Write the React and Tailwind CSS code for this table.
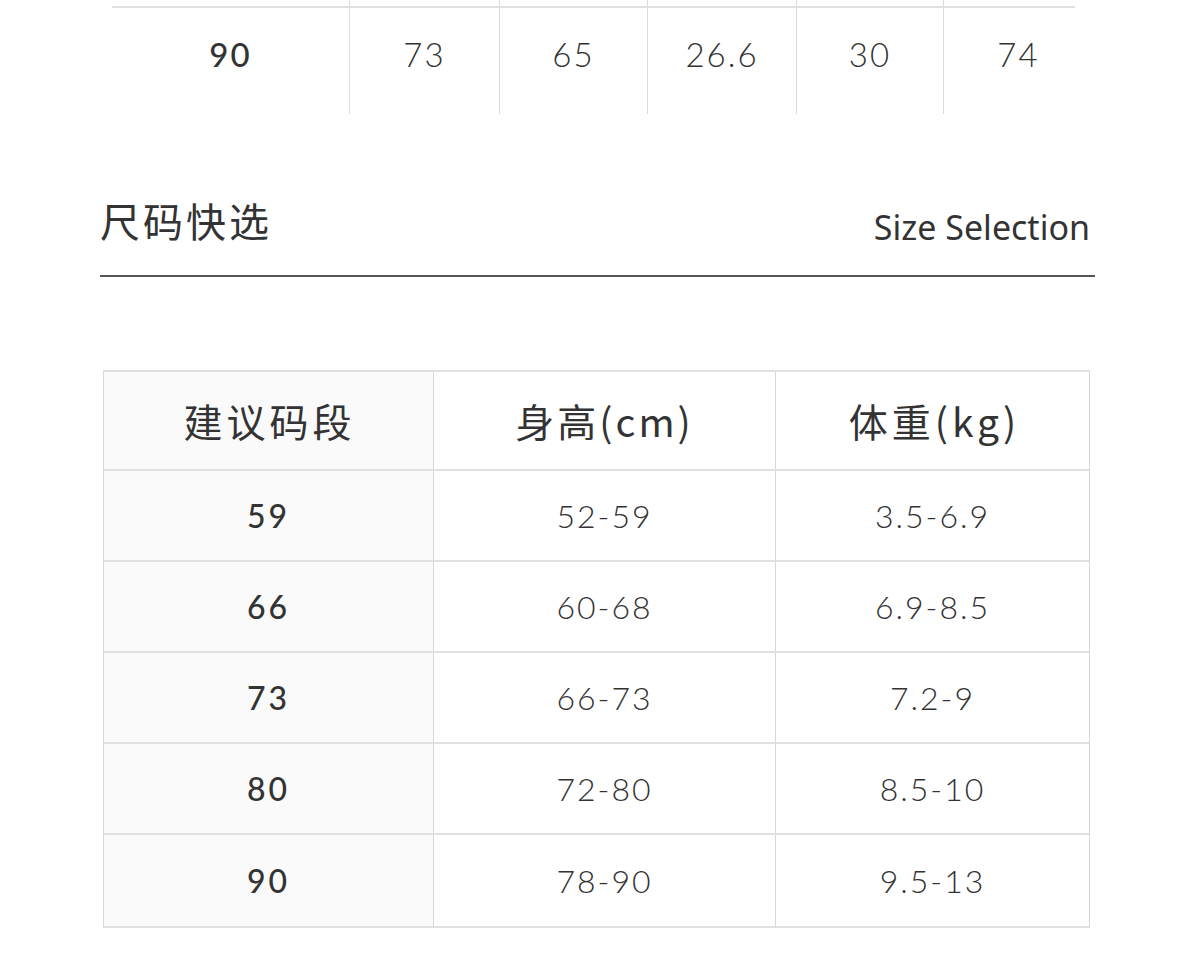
import React from "react";

const topRow = [
  {v: "90", w: "w-[237px]"},
  {v: "73", w: "w-[150px]"},
  {v: "65", w: "w-[148px]"},
  {v: "26.6", w: "w-[149px]"},
  {v: "30", w: "w-[147px]"},
  {v: "74", w: "w-[150px]"},
];

const sizes = [
  ["59", "52-59", "3.5-6.9"],
  ["66", "60-68", "6.9-8.5"],
  ["73", "66-73", "7.2-9"],
  ["80", "72-80", "8.5-10"],
  ["90", "78-90", "9.5-13"],
];

const cjk = "font-['Noto_Sans_CJK_SC','Noto_Sans',sans-serif]";
const num = "font-['Lato','Noto_Sans',sans-serif]";

function TopTable() {
  return (
    <div className="pl-[112px]">
      <div className="flex h-[6px]">
        {topRow.map((c, i) => (
          <div key={i} className={`${c.w} ${i > 0 ? "border-l border-[#dcdcdc]" : ""}`} />
        ))}
      </div>
      <div className="w-[963px] h-[2px] bg-[#e0e0e0]" />
      <div className="flex h-[106px]">
        {topRow.map((c, i) => (
          <div
            key={i}
            className={`${c.w} ${num} flex items-center justify-center pb-[12px] text-[33px] tracking-[2px] text-[#333] ${
              i > 0 ? "border-l border-[#dcdcdc] font-light" : "font-medium"
            }`}
          >
            {c.v}
          </div>
        ))}
      </div>
    </div>
  );
}

function Heading() {
  return (
    <div className="ml-[100px] w-[995px] mt-[86px] flex items-end justify-between border-b-2 border-[#555] pb-[34px]">
      <div className={`${cjk} text-[40px] leading-[40px] tracking-[3px] text-[#333] mb-[1px]`}>尺码快选</div>
      <div className="font-['Noto_Sans',sans-serif] text-[34px] leading-[34px] text-[#333] mr-[5px] -mb-[3px]">
        Size Selection
      </div>
    </div>
  );
}

function SizeTable() {
  const head = `${cjk} flex items-center justify-center text-[39px] text-[#333]`;
  const cell = `${num} border-l border-[#d6d6d6] flex items-center justify-center text-[32px] font-light tracking-[2px] text-[#333]`;
  return (
    <div className="ml-[103px] mt-[93px] w-[987px] border border-[#d6d6d6] border-t-2 border-b-2 border-t-[#e0e0e0] border-b-[#e0e0e0]">
      <div className="grid grid-cols-[329px_342px_1fr] h-[99px] border-b-2 border-[#e0e0e0]">
        <div className={`${head} bg-[#fafafa] tracking-[4px] pl-[2px]`}>建议码段</div>
        <div className={`${head} border-l border-[#d6d6d6] tracking-[3px]`}>身高(cm)</div>
        <div className={`${head} border-l border-[#d6d6d6] tracking-[4px] pl-[4px]`}>体重(kg)</div>
      </div>
      {sizes.map((r, i) => (
        <div
          key={i}
          className={`grid grid-cols-[329px_342px_1fr] h-[91px] ${i < sizes.length - 1 ? "border-b-2 border-[#e0e0e0]" : ""}`}
        >
          <div className={`${num} bg-[#fafafa] flex items-center justify-center text-[32px] font-medium tracking-[3px] text-[#333]`}>
            {r[0]}
          </div>
          <div className={cell}>{r[1]}</div>
          <div className={cell}>{r[2]}</div>
        </div>
      ))}
    </div>
  );
}

export default function App() {
  return (
    <div className="w-[1200px] h-[960px] bg-white overflow-hidden">
      <TopTable />
      <Heading />
      <SizeTable />
    </div>
  );
}
